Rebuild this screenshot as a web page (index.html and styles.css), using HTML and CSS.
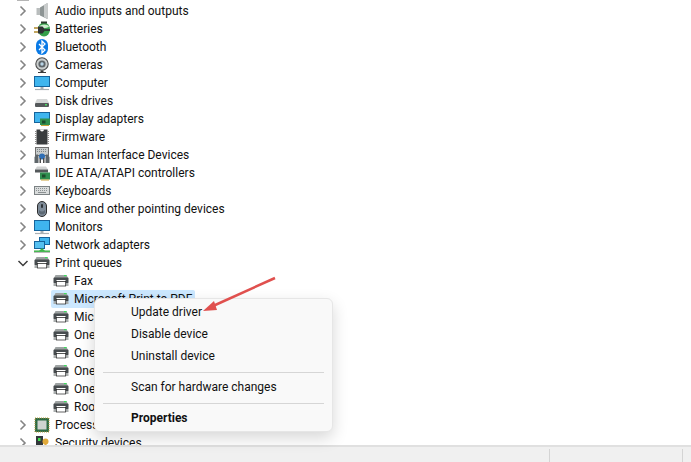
FILE: index.html
```html
<!DOCTYPE html>
<html lang="en">
<head>
<meta charset="utf-8">
<title>Device Manager</title>
<link rel="stylesheet" href="styles.css">
</head>
<body>
<svg class="defs" width="0" height="0" aria-hidden="true">
  <symbol id="i-chev" viewBox="0 0 12 12"><path d="M3.500 1.500 8 6l-4.500 4.500" fill="none" stroke="#858585" stroke-width="1.600"/></symbol>
  <symbol id="i-down" viewBox="0 0 12 12"><path d="M1.500 4 6 8.500 10.500 4" fill="none" stroke="#3c3c3c" stroke-width="1.500"/></symbol>
  <symbol id="i-audio" viewBox="0 0 16 16"><path d="M2.500 5h4v7h-4z" fill="#b9bdbd"/><path d="M6 4.500 13.500 0v16L6 12.500z" fill="#8d9494"/><path d="M10 2l3.500-2v16L10 14z" fill="#c9cccc"/></symbol>
  <symbol id="i-batt" viewBox="0 0 16 16"><ellipse cx="10" cy="8.500" rx="6" ry="7" fill="#35a04a"/><path d="M5 6c1-3 9-3.500 10 0-3 1.500-7 1.500-10 0z" fill="#cdeecd"/><rect x="7" y="0.500" width="6" height="2" fill="#2b3a2b"/><path d="M0 7h5M0 11h5" stroke="#b08a2e" stroke-width="1.600"/><path d="M4 5.500h4.500l3 3.500-3 3.500H4z" fill="#2f3335"/><path d="M11 9h5" stroke="#2f3335" stroke-width="1.800"/></symbol>
  <symbol id="i-bt" viewBox="0 0 16 16"><rect x="2" y="0" width="12" height="16" rx="6" fill="#0a7ae6"/><path d="M5 5l6 6-3 3V2l3 3-6 6" fill="none" stroke="#fff" stroke-width="1.300"/></symbol>
  <symbol id="i-cam" viewBox="0 0 16 16"><circle cx="8" cy="7" r="6.200" fill="#c9cdcd" stroke="#4c4c4c" stroke-width="1.100"/><circle cx="8" cy="7" r="3.600" fill="#5f666a"/><circle cx="8" cy="7" r="1.700" fill="#b8d4e6"/><path d="M6.500 13.500h3V15h-3zM4 15h8v1H4z" fill="#3c3c3c"/></symbol>
  <symbol id="i-mon" viewBox="0 0 16 16"><rect x="0.500" y="1.500" width="15" height="10" fill="#3fb5ee" stroke="#16649c"/><path d="M6.500 12h3v2h-3z" fill="#a8b0b4"/><path d="M1 14.500h14" stroke="#a8b0b4" stroke-width="1.200"/></symbol>
  <symbol id="i-disk" viewBox="0 0 16 16"><path d="M3 6h10l2 4H1z" fill="#d4d6d6"/><rect x="1" y="10" width="14" height="4" rx="1" fill="#55595b"/><rect x="11" y="11" width="2" height="1.500" fill="#4cd964"/></symbol>
  <symbol id="i-disp" viewBox="0 0 16 16"><rect x="0.500" y="1.500" width="15" height="10" fill="#3fb5ee" stroke="#16649c"/><rect x="6" y="7.500" width="10" height="6.500" fill="#2f8f4f"/><path d="M7 14.500h8" stroke="#c9a23a"/><rect x="8" y="9.500" width="3.500" height="3" fill="#1d4d2c"/></symbol>
  <symbol id="i-firm" viewBox="0 0 16 16"><rect x="2.500" y="0.500" width="11" height="15" fill="#3a3d3f"/><path d="M6 0.500a2 2 0 0 0 4 0z" fill="#fff"/><path d="M1 2.500h2M1 4.500h2M1 6.500h2M1 8.500h2M1 10.500h2M1 12.500h2M1 14.500h2M13 2.500h2M13 4.500h2M13 6.500h2M13 8.500h2M13 10.500h2M13 12.500h2M13 14.500h2" stroke="#8f8f8f"/></symbol>
  <symbol id="i-hid" viewBox="0 0 16 16"><rect x="1.500" y="0.500" width="13" height="8" fill="#c8cccc" stroke="#6e6e6e"/><path d="M3 2.500h10M3 4.500h10" stroke="#7f8587" stroke-dasharray="1 1"/><path d="M0.500 16V10l2.500-3 1.500 1.500V16zM11.500 16V8.500L13 7l2.500 3v6z" fill="#5f666a"/><circle cx="8" cy="9.500" r="3" fill="#2f6fb5"/><path d="M5.500 16v-5h1.500v5zM9 16v-5h1.500v5z" fill="#4c4c4c"/></symbol>
  <symbol id="i-ide" viewBox="0 0 16 16"><path d="M3 1.500h9l2 3H1z" fill="#d0d2d2"/><rect x="1" y="4.500" width="13" height="3" fill="#55595b"/><rect x="6" y="7.500" width="10" height="7" fill="#2f8f4f"/><rect x="8" y="9.500" width="3.500" height="3" fill="#1d4d2c"/><path d="M7 15h8" stroke="#c9a23a"/></symbol>
  <symbol id="i-key" viewBox="0 0 16 16"><rect x="0.500" y="3.500" width="15" height="8" fill="#d9dcdc" stroke="#7c8284"/><path d="M2 5.500h12M2 7.500h12" stroke="#8b9092" stroke-dasharray="1 1"/><path d="M4 9.500h8" stroke="#8b9092"/></symbol>
  <symbol id="i-mouse" viewBox="0 0 16 16"><rect x="3.500" y="0.500" width="9" height="15" rx="4.500" fill="#7f8c99" stroke="#2c2c2c"/><rect x="7" y="3" width="2" height="4" rx="1" fill="#2e3338"/><path d="M5 9c2 2 4 2 6 0v3c-2 2-4 2-6 0z" fill="#5c6873"/></symbol>
  <symbol id="i-net" viewBox="0 0 16 16"><rect x="5.500" y="0.500" width="10" height="7" fill="#3fb5ee" stroke="#16649c"/><rect x="0.500" y="4.500" width="10" height="7" fill="#55c0f0" stroke="#16649c"/><path d="M8 11l3 3H5z" fill="#3fb54a"/><path d="M0 14.200h16" stroke="#3fb54a" stroke-width="1.500"/><path d="M0 15.500h16" stroke="#bbb"/></symbol>
  <symbol id="i-print" viewBox="0 0 16 16"><path d="M2.500 2h11l1.500 3H1z" fill="#9ea3a3"/><rect x="11" y="2" width="2.500" height="1.200" fill="#39e05a"/><rect x="0.500" y="4.500" width="15" height="6" rx="1" fill="#474c4f"/><rect x="0.500" y="10.500" width="15" height="2.500" fill="#a9adad"/><rect x="3.500" y="7" width="9" height="1.500" fill="#fff"/><rect x="3.300" y="8.500" width="9.400" height="4.500" fill="#fff" stroke="#222" stroke-width="0.700"/></symbol>
  <symbol id="i-cpu" viewBox="0 0 16 16"><rect x="1" y="1" width="14" height="14" fill="#2d6b45" stroke="#b79a3c" stroke-dasharray="1 1"/><rect x="3.500" y="3.500" width="9" height="9" fill="#cfd3d0"/></symbol>
  <symbol id="i-sec" viewBox="0 0 16 16"><rect x="2" y="1" width="7" height="14" fill="#33383b"/><rect x="4" y="3" width="2.500" height="3" fill="#3fe04f"/><circle cx="11.500" cy="6.500" r="3" fill="#e0a93a"/><path d="M10.500 8h2v6h-2z" fill="#e0a93a"/></symbol>
</svg>

<div class="window">
  <main class="tree">
    <div class="topstub"></div>
    <div class="row"><svg class="chev"><use href="#i-chev"/></svg><svg class="ico"><use href="#i-audio"/></svg><span>Audio inputs and outputs</span></div>
    <div class="row"><svg class="chev"><use href="#i-chev"/></svg><svg class="ico"><use href="#i-batt"/></svg><span>Batteries</span></div>
    <div class="row"><svg class="chev"><use href="#i-chev"/></svg><svg class="ico"><use href="#i-bt"/></svg><span>Bluetooth</span></div>
    <div class="row"><svg class="chev"><use href="#i-chev"/></svg><svg class="ico"><use href="#i-cam"/></svg><span>Cameras</span></div>
    <div class="row"><svg class="chev"><use href="#i-chev"/></svg><svg class="ico"><use href="#i-mon"/></svg><span>Computer</span></div>
    <div class="row"><svg class="chev"><use href="#i-chev"/></svg><svg class="ico"><use href="#i-disk"/></svg><span>Disk drives</span></div>
    <div class="row"><svg class="chev"><use href="#i-chev"/></svg><svg class="ico"><use href="#i-disp"/></svg><span>Display adapters</span></div>
    <div class="row"><svg class="chev"><use href="#i-chev"/></svg><svg class="ico"><use href="#i-firm"/></svg><span>Firmware</span></div>
    <div class="row"><svg class="chev"><use href="#i-chev"/></svg><svg class="ico"><use href="#i-hid"/></svg><span>Human Interface Devices</span></div>
    <div class="row"><svg class="chev"><use href="#i-chev"/></svg><svg class="ico"><use href="#i-ide"/></svg><span>IDE ATA/ATAPI controllers</span></div>
    <div class="row"><svg class="chev"><use href="#i-chev"/></svg><svg class="ico"><use href="#i-key"/></svg><span>Keyboards</span></div>
    <div class="row"><svg class="chev"><use href="#i-chev"/></svg><svg class="ico"><use href="#i-mouse"/></svg><span>Mice and other pointing devices</span></div>
    <div class="row"><svg class="chev"><use href="#i-chev"/></svg><svg class="ico"><use href="#i-mon"/></svg><span>Monitors</span></div>
    <div class="row"><svg class="chev"><use href="#i-chev"/></svg><svg class="ico"><use href="#i-net"/></svg><span>Network adapters</span></div>
    <div class="row"><svg class="chev"><use href="#i-down"/></svg><svg class="ico"><use href="#i-print"/></svg><span>Print queues</span></div>
    <div class="row child"><svg class="ico"><use href="#i-print"/></svg><span>Fax</span></div>
    <div class="row child selected"><svg class="ico"><use href="#i-print"/></svg><span>Microsoft Print to PDF</span></div>
    <div class="row child"><svg class="ico"><use href="#i-print"/></svg><span>Microsoft XPS Document Writer</span></div>
    <div class="row child"><svg class="ico"><use href="#i-print"/></svg><span>OneNote</span></div>
    <div class="row child"><svg class="ico"><use href="#i-print"/></svg><span>OneNote</span></div>
    <div class="row child"><svg class="ico"><use href="#i-print"/></svg><span>OneNote</span></div>
    <div class="row child"><svg class="ico"><use href="#i-print"/></svg><span>OneNote</span></div>
    <div class="row child"><svg class="ico"><use href="#i-print"/></svg><span>Root Print Queue</span></div>
    <div class="row"><svg class="chev"><use href="#i-chev"/></svg><svg class="ico"><use href="#i-cpu"/></svg><span>Processors</span></div>
    <div class="row"><svg class="chev"><use href="#i-chev"/></svg><svg class="ico"><use href="#i-sec"/></svg><span>Security devices</span></div>
  </main>
  <footer class="status">
    <div class="status-cell status-main"></div>
    <div class="status-cell status-mid"></div>
    <div class="status-cell status-end"></div>
  </footer>

  <div class="menu">
    <div class="item">Update driver</div>
    <div class="item">Disable device</div>
    <div class="item">Uninstall device</div>
    <div class="sep sep-a"></div>
    <div class="item">Scan for hardware changes</div>
    <div class="sep sep-b"></div>
    <div class="item strong">Properties</div>
  </div>

  <svg class="arrow" width="691" height="462" viewBox="0 0 691 462" aria-hidden="true">
    <path d="M275 278 213 306" stroke="#e0504e" stroke-width="2.500" fill="none"/>
    <path d="M203 311 214 301 217 310z" fill="#e0504e"/>
  </svg>
</div>
</body>
</html>
```

FILE: styles.css
```css
* { box-sizing: border-box; }
html, body { margin: 0; padding: 0; }
body {
  width: 691px;
  height: 462px;
  overflow: hidden;
  background: #fff;
  color: #111;
  font-family: Roboto, "Liberation Sans", sans-serif;
  font-size: 12px;
}
.defs { position: absolute; }
.window {
  position: relative;
  width: 691px;
  height: 462px;
  display: flex;
  flex-direction: column;
}
.tree {
  flex: 1;
  min-height: 0;
  overflow: hidden;
  background: #fff;
}
.topstub {
  width: 12px;
  height: 1px;
  margin: 0 0 1px 17px;
  background: #b5b5b5;
}
.row {
  height: 18px;
  display: flex;
  align-items: center;
  padding-left: 17px;
  white-space: nowrap;
}
.chev { width: 12px; height: 12px; flex: none; }
.ico { width: 16px; height: 16px; flex: none; margin-left: 5px; margin-right: 5px; }
.child { padding-left: 53px; }
.child .ico { margin-left: 0; margin-right: 5px; }
.selected {
  width: 144px;
  margin-left: 51px;
  padding-left: 2px;
  background: #cce8ff;
  border-radius: 2px;
}
.status {
  height: 17px;
  flex: none;
  display: flex;
  background: #f0f0f0;
  border-top: 2px solid #e0e0e0;
  padding-top: 2px;
}
.status-cell { height: 100%; }
.status-main { width: 549px; }
.status-mid { width: 133px; border-left: 1px solid #d4d4d4; }
.status-end { flex: 1; border-left: 1px solid #d4d4d4; }
.menu {
  position: absolute;
  left: 94px;
  top: 298px;
  width: 239px;
  height: 134px;
  padding: 2px 0;
  background: #f9f9f9;
  border: 1px solid #e6e6e6;
  border-radius: 6px;
  box-shadow: 0 6px 16px rgba(0, 0, 0, 0.16);
}
.item {
  height: 22px;
  line-height: 22px;
  padding-left: 36px;
  white-space: nowrap;
}
.strong { font-weight: 700; }
.sep {
  height: 1px;
  margin-left: 8px;
  margin-right: 8px;
  background: #d6d6d6;
}
.sep-a { margin-top: 5px; margin-bottom: 3px; }
.sep-b { margin-top: 5px; margin-bottom: 3px; }
.arrow {
  position: absolute;
  left: 0;
  top: 0;
  pointer-events: none;
}
```
